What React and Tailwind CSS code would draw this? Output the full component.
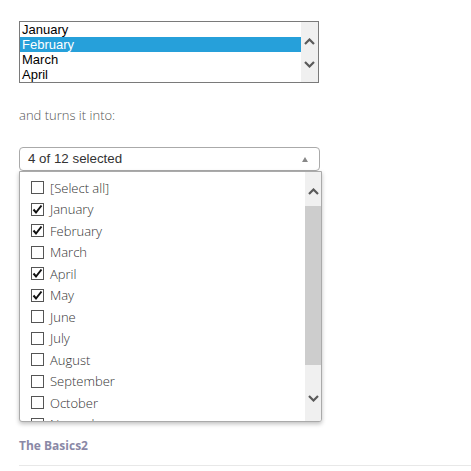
import React from "react";

const months = [
  ["[Select all]", false],
  ["January", true],
  ["February", true],
  ["March", false],
  ["April", true],
  ["May", true],
  ["June", false],
  ["July", false],
  ["August", false],
  ["September", false],
  ["October", false],
  ["November", false],
];

function Chevron({ up, color = "#5a5a5a" }) {
  return (
    <svg width="11" height="7" viewBox="0 0 11 7" className="block">
      <polyline
        points={up ? "1,6 5.5,1.5 10,6" : "1,1 5.5,5.5 10,1"}
        fill="none"
        stroke={color}
        strokeWidth="2.2"
      />
    </svg>
  );
}

function Checkbox({ checked }) {
  return (
    <div className="w-[13px] h-[13px] border border-[#555] bg-white shrink-0 flex items-center justify-center">
      {checked && (
        <svg width="11" height="11" viewBox="0 0 11 11" className="block">
          <polyline points="1.5,5.5 4,8.5 9.5,1.5" fill="none" stroke="#111" strokeWidth="2" />
        </svg>
      )}
    </div>
  );
}

export default function App() {
  return (
    <div className="w-[471px] h-[471px] bg-white overflow-hidden pt-[21px] pl-[19px]">
      {/* Native listbox */}
      <div className="w-[300px] h-[62px] border border-[#7a7a7a] flex bg-white" style={{ fontFamily: "'Liberation Sans', Arial, sans-serif" }}>
        <div className="flex-1 flex flex-col text-[13px] leading-[15px] text-black">
          <div className="h-[15px] pl-[2px]">January</div>
          <div className="h-[15px] pl-[2px] bg-[#26a0da] text-white">February</div>
          <div className="h-[15px] pl-[2px]">March</div>
          <div className="h-[15px] pl-[2px]">April</div>
        </div>
        <div className="w-[17px] bg-[#f0f0f0] flex flex-col items-center justify-center gap-[16px] pt-[1px]">
          <Chevron up />
          <Chevron />
        </div>
      </div>

      <p className="mt-[23px] text-[13px] leading-[18px] font-light text-[#555]" style={{ fontFamily: "'Open Sans', sans-serif" }}>
        and turns it into:
      </p>

      {/* Multi-select widget */}
      <div className="mt-[23px] w-[303px]">
        <div className="w-[301px] h-[24px] border border-[#aaa] rounded-[4px] flex items-center justify-between pl-[8px] pr-[11px] bg-white">
          <span className="text-[13.33px] text-[#333]" style={{ fontFamily: "'Liberation Sans', Arial, sans-serif" }}>
            4 of 12 selected
          </span>
          <span className="w-0 h-0 border-l-[3px] border-r-[3px] border-b-[5px] border-l-transparent border-r-transparent border-b-[#888]" />
        </div>
        <div className="h-[251px] border border-[#aaa] rounded-b-[3px] shadow-[0_2px_4px_rgba(0,0,0,0.25)] flex overflow-hidden bg-white">
          <div className="flex-1 pt-[5px] pl-[11px] overflow-hidden" style={{ fontFamily: "'Open Sans', sans-serif" }}>
            {months.map(([m, c]) => (
              <div key={m} className="h-[21.5px] flex items-center gap-[6px] shrink-0">
                <Checkbox checked={c} />
                <span className="text-[13px] leading-[18px] font-light text-[#333]">{m}</span>
              </div>
            ))}
          </div>
          <div className="w-[16px] bg-[#f0f0f0] flex flex-col">
            <div className="h-[34px] flex items-center justify-center pt-[4px]">
              <Chevron up />
            </div>
            <div className="h-[159px] bg-[#cdcdcd]" />
            <div className="flex-1 flex items-end justify-center pb-[19px]">
              <Chevron />
            </div>
          </div>
        </div>
      </div>

      <div className="mt-[16px] text-[12px] leading-[16px] font-bold text-[#8a88a6]" style={{ fontFamily: "'Open Sans', sans-serif" }}>
        The Basics2
      </div>
      <div className="mt-[11px] h-px bg-[#e8e8e8]" />
    </div>
  );
}
